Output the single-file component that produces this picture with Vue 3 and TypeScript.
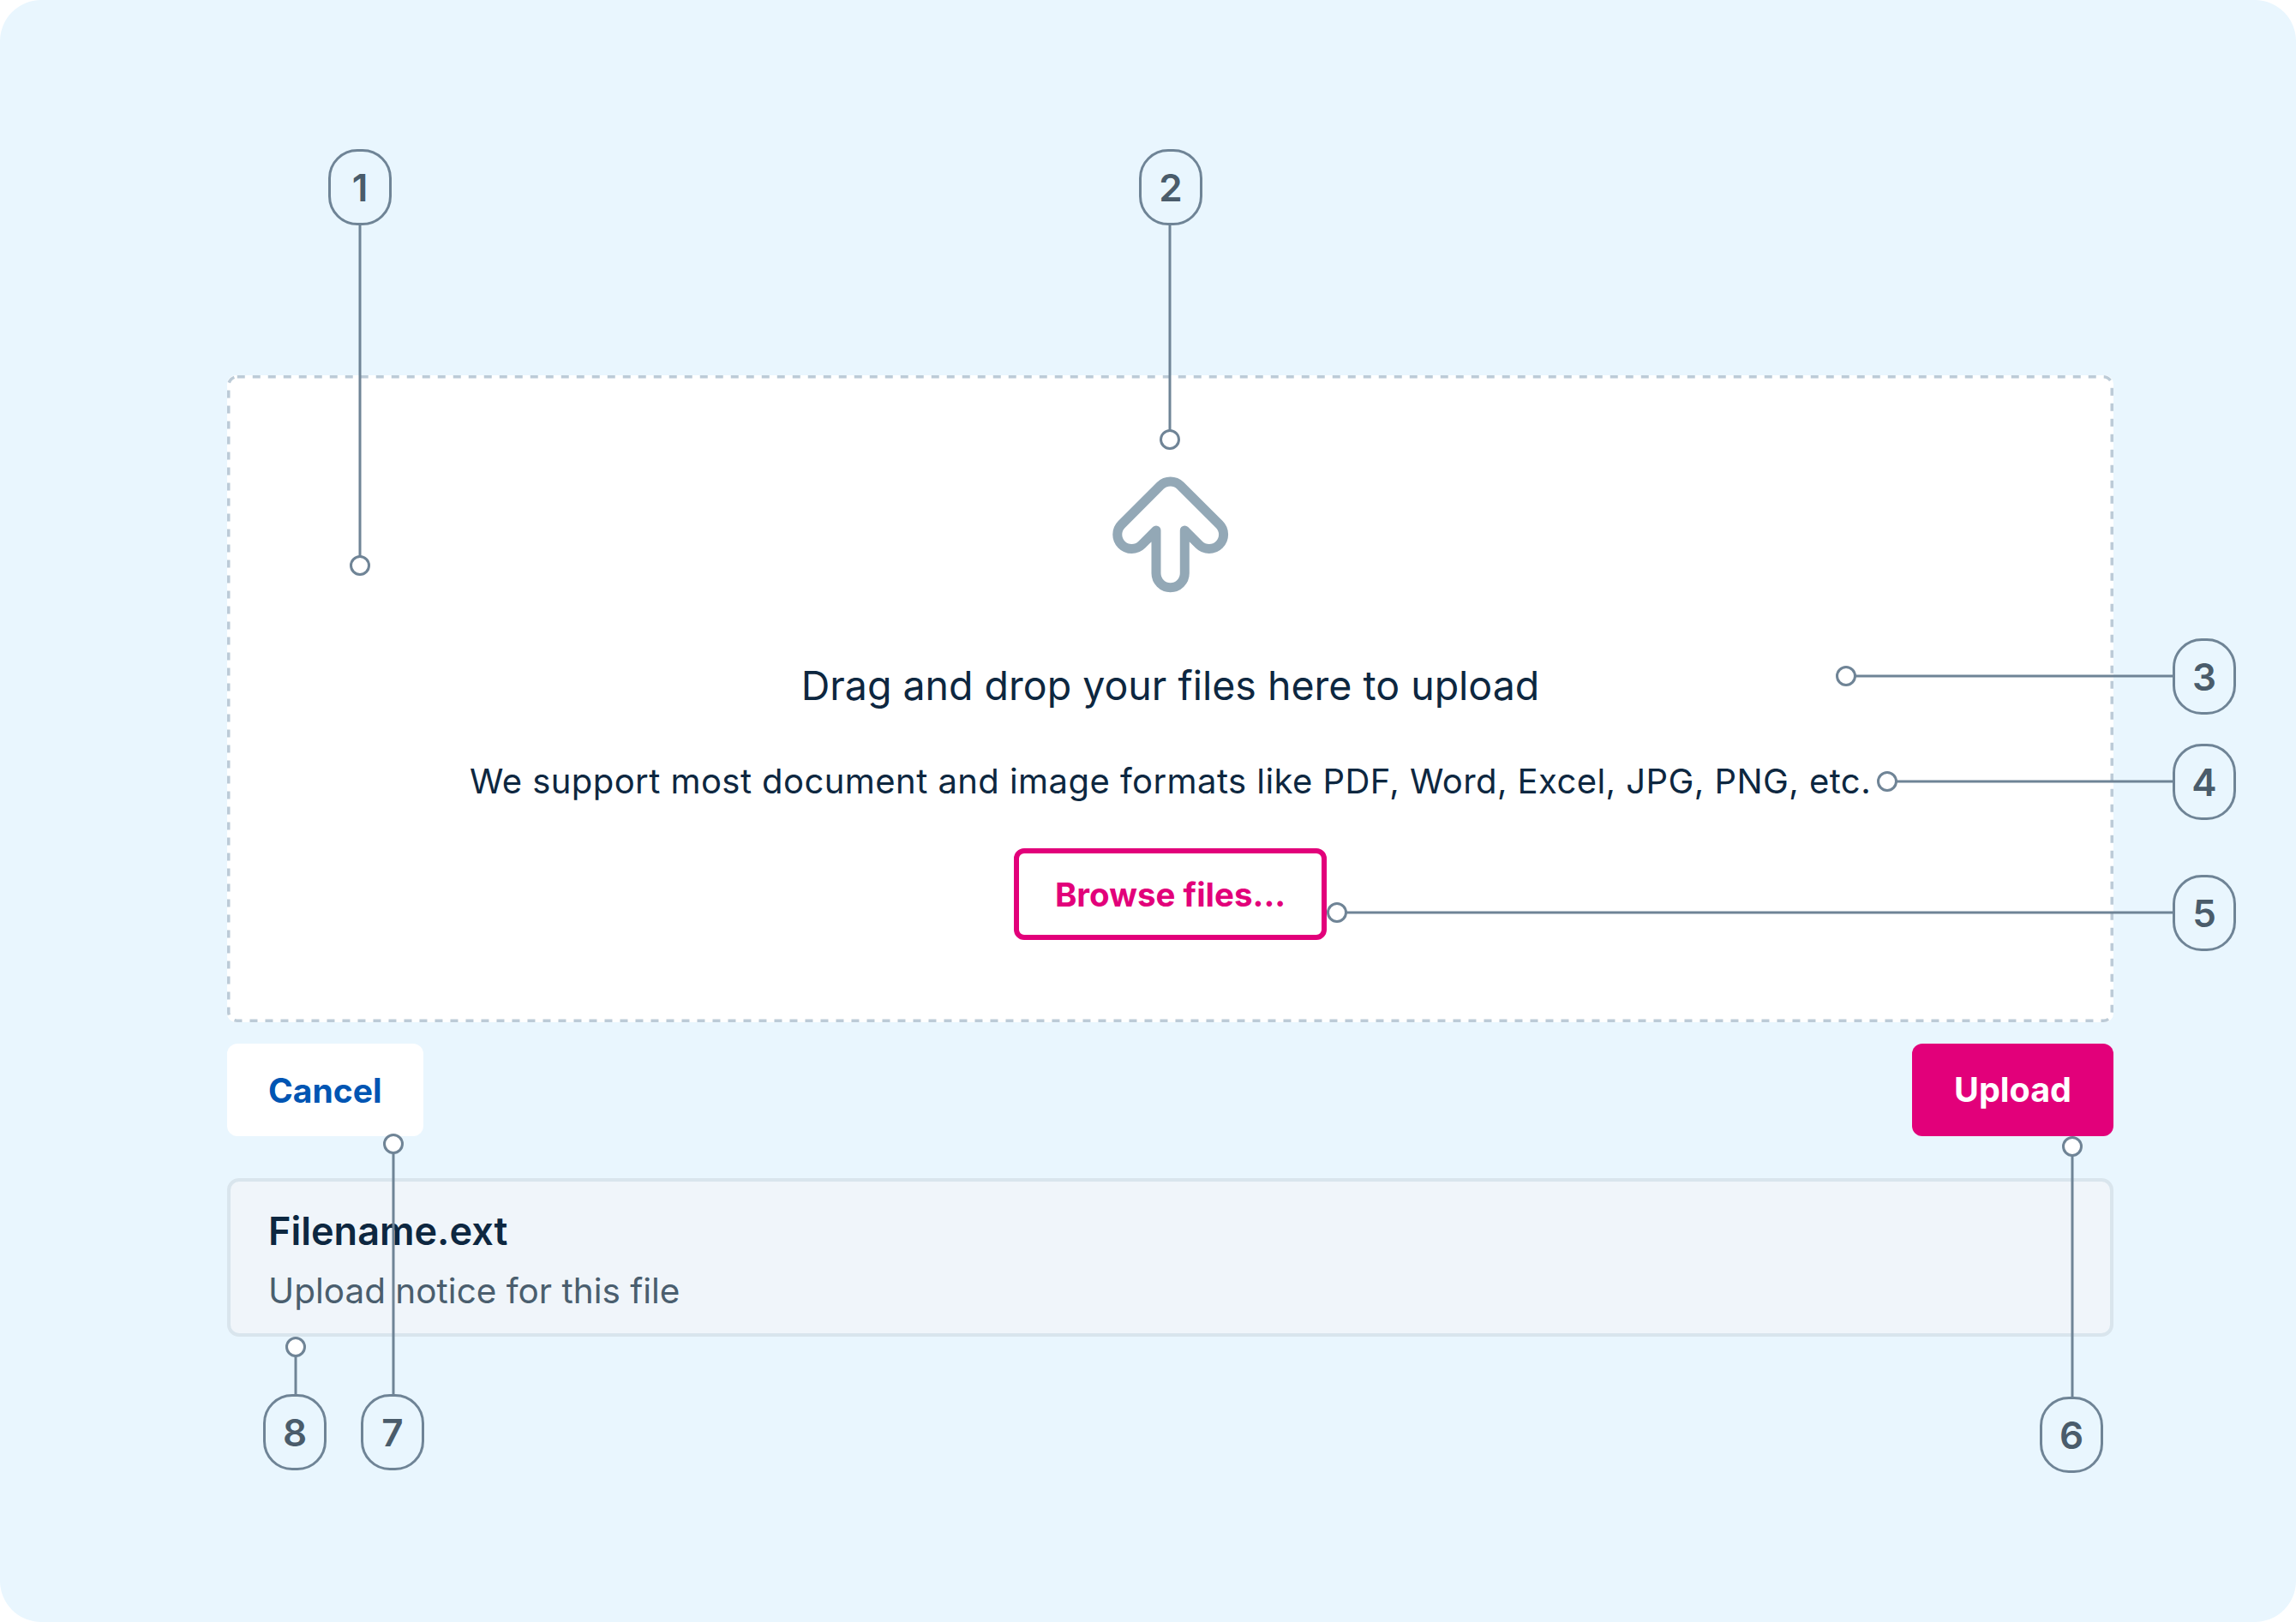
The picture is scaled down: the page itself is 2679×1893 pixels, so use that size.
<script setup lang="ts">
interface Callout {
  n: number
  left: number
  top: number
  x1: number
  y1: number
  x2: number
  y2: number
}

// page-space coordinates: badge corner, then the leader from badge edge to dot
const callouts: Callout[] = [
  { n: 1, left: 383, top: 174, x1: 420, y1: 263, x2: 420, y2: 660 },
  { n: 2, left: 1329, top: 174, x1: 1365, y1: 263, x2: 1365, y2: 513 },
  { n: 3, left: 2535, top: 745, x1: 2535, y1: 789, x2: 2154, y2: 789 },
  { n: 4, left: 2535, top: 868, x1: 2535, y1: 912, x2: 2202, y2: 912 },
  { n: 5, left: 2535, top: 1021, x1: 2535, y1: 1065, x2: 1560, y2: 1065 },
  { n: 6, left: 2380, top: 1630, x1: 2418, y1: 1630, x2: 2418, y2: 1338 },
  { n: 7, left: 421, top: 1627, x1: 459, y1: 1627, x2: 459, y2: 1335 },
  { n: 8, left: 307, top: 1627, x1: 345, y1: 1627, x2: 345, y2: 1572 },
]
</script>

<template>
  <div class="panel">
    <main class="uploader">
      <section class="dropzone">
        <svg class="dash" aria-hidden="true"><rect x="1.75" y="1.75" rx="10" ry="10" /></svg>
        <svg class="arrow" width="136" height="136" viewBox="0 0 136 136" aria-hidden="true">
          <path d="M51 63 L34.3 79.7 A16.7 16.7 0 0 1 10.7 56 L56 10.7 A16.7 16.7 0 0 1 79.3 10.7 L124.7 56 A16.7 16.7 0 0 1 101 79.7 L84.3 63 L84.3 113 A16.65 16.65 0 0 1 51 113 Z" />
        </svg>
        <p class="title">Drag and drop your files here to upload</p>
        <p class="hint">We support most document and image formats like PDF, Word, Excel, JPG, PNG, etc.</p>
        <button class="btn btn-outline" type="button">Browse files...</button>
      </section>

      <div class="actions">
        <button class="btn btn-cancel" type="button">Cancel</button>
        <button class="btn btn-primary" type="button">Upload</button>
      </div>

      <section class="notice">
        <p class="notice-name">Filename.ext</p>
        <p class="notice-text">Upload notice for this file</p>
      </section>
    </main>

    <svg class="leaders" width="2679" height="1893" aria-hidden="true">
      <g v-for="c in callouts" :key="c.n">
        <line :x1="c.x1" :y1="c.y1" :x2="c.x2" :y2="c.y2" />
        <circle :cx="c.x2" :cy="c.y2" r="10.5" />
      </g>
    </svg>
    <div
      v-for="c in callouts"
      :key="c.n"
      class="badge"
      :style="{ left: c.left + 'px', top: c.top + 'px' }"
    >{{ c.n }}</div>
  </div>
</template>

<style>
html, body { background: #fff; }
</style>

<style scoped>
.panel {
  position: relative;
  width: 2679px;
  height: 1893px;
  background: #e9f6fe;
  border-radius: 48px;
  overflow: hidden;
  font-family: "Inter", "Liberation Sans", sans-serif;
  color: #0d2740;
}

.uploader {
  display: flex;
  flex-direction: column;
  width: 2201px;
  margin-left: 265px;
  padding-top: 438px;
}

.dropzone {
  position: relative;
  box-sizing: border-box;
  height: 755px;
  padding-top: 118px;
  display: flex;
  flex-direction: column;
  align-items: center;
  background: #fff;
  border-radius: 10px;
}
.dash {
  position: absolute;
  inset: 0;
  width: 100%;
  height: 100%;
}
.dash rect {
  width: calc(100% - 3.5px);
  height: calc(100% - 3.5px);
  fill: none;
  stroke: #bccbd7;
  stroke-width: 3.5;
  stroke-dasharray: 9 9;
}
.arrow { display: block; }
.arrow path {
  fill: none;
  stroke: #93a8b6;
  stroke-width: 11;
  stroke-linejoin: round;
}

.title {
  margin: 78px 0 0;
  font-size: 46.5px;
  line-height: 60px;
}
.hint {
  margin: 52px 0 0;
  font-size: 40px;
  letter-spacing: 0.44px;
  line-height: 60px;
}

.btn {
  box-sizing: border-box;
  height: 108px;
  padding: 0 48px;
  border: 0;
  border-radius: 12px;
  font-family: inherit;
  font-size: 39px;
  font-weight: 700;
}
.btn-outline {
  margin-top: 48px;
  height: 107px;
  padding: 0 42px;
  background: #fff;
  border: 6px solid #e2007a;
  color: #e2007a;
  font-size: 38.5px;
}
.actions {
  display: flex;
  justify-content: space-between;
  margin-top: 25px;
}
.btn-cancel { background: #fff; color: #0055b3; }
.btn-primary {
  padding: 0 49px;
  background: #e2007a;
  color: #fff;
  font-size: 39.5px;
}

.notice {
  box-sizing: border-box;
  height: 185px;
  margin-top: 49px;
  padding: 28px 44px;
  background: #f0f5fa;
  border: 4px solid #d9e5ed;
  border-radius: 14px;
}
.notice-name {
  margin: 0;
  font-size: 45px;
  line-height: 60px;
  font-weight: 600;
}
.notice-text {
  margin: 15px 0 0;
  font-size: 40.5px;
  line-height: 50px;
  color: #4a5e6e;
}

.leaders {
  position: absolute;
  inset: 0;
  pointer-events: none;
}
.leaders line {
  stroke: #6f8496;
  stroke-width: 3;
}
.leaders circle {
  fill: #fff;
  stroke: #6f8496;
  stroke-width: 3;
}

.badge {
  position: absolute;
  box-sizing: border-box;
  display: flex;
  align-items: center;
  justify-content: center;
  width: 74px;
  height: 89px;
  background: #e9f6fe;
  border: 3px solid #6f8496;
  border-radius: 34px;
  font-size: 44px;
  font-weight: 600;
  color: #4a5c6b;
}
</style>
